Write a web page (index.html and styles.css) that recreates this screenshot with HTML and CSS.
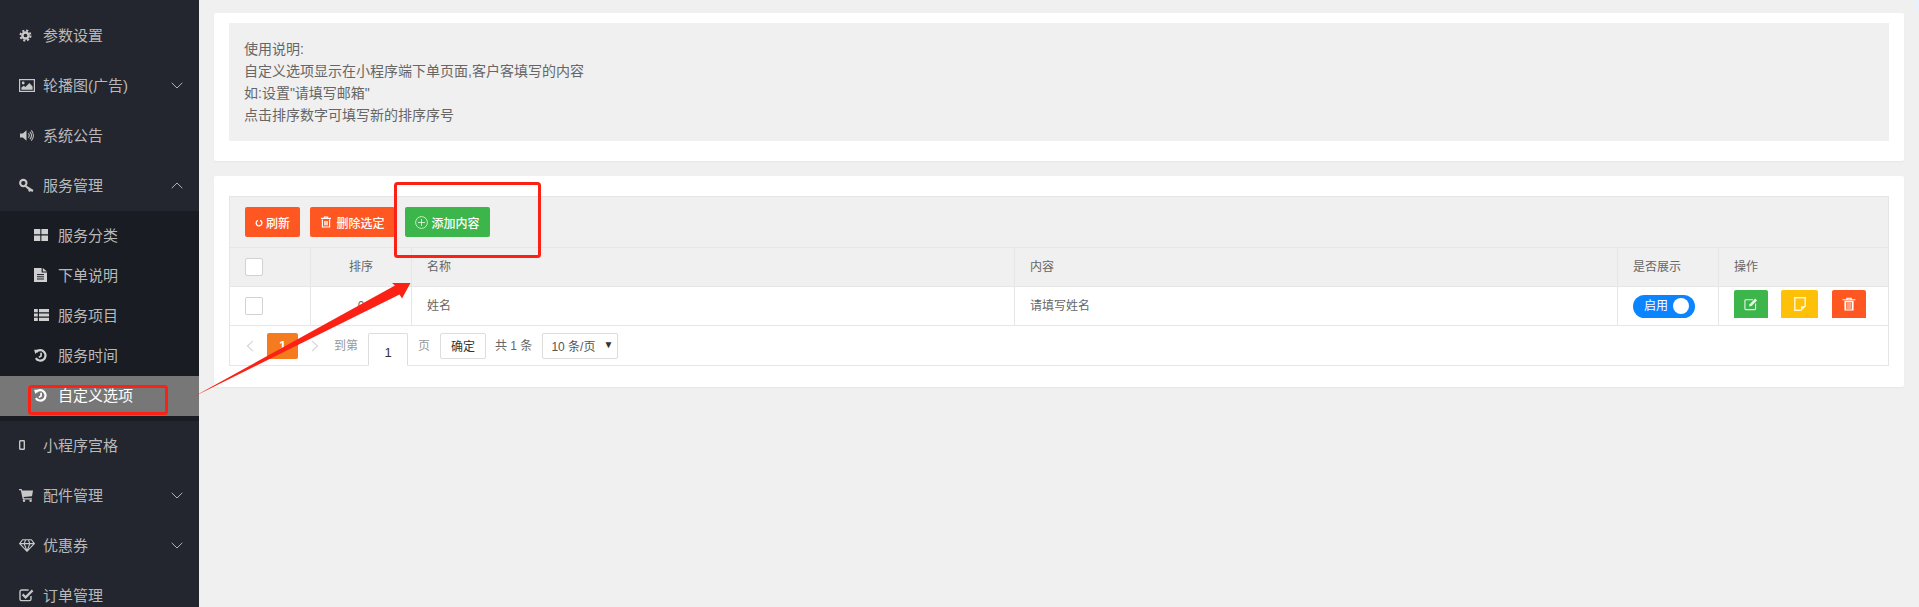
FILE: index.html
```html
<!DOCTYPE html>
<html lang="zh">
<head>
<meta charset="utf-8">
<title>自定义选项</title>
<link rel="stylesheet" href="styles.css">
</head>
<body>
<svg class="sprite" width="0" height="0" aria-hidden="true">
  <symbol id="i-gear" viewBox="0 0 16 16"><circle cx="8" cy="8" r="3.8" fill="none" stroke="currentColor" stroke-width="3"/><circle cx="8" cy="8" r="6.2" fill="none" stroke="currentColor" stroke-width="2.4" stroke-dasharray="2.6 2.27"/></symbol>
  <symbol id="i-pic" viewBox="0 0 16 13"><rect x=".6" y=".6" width="14.8" height="11.8" fill="none" stroke="currentColor" stroke-width="1.2"/><circle cx="4.2" cy="4" r="1.4" fill="currentColor"/><path d="M2.4 10.8V8.6l2.4-1.8 1.6 1.2 4-4 3.2 3.4v3.4z" fill="currentColor"/></symbol>
  <symbol id="i-vol" viewBox="0 0 16 14"><path d="M1 4.8h3L8 1.4v11.2L4 9.2H1z" fill="currentColor"/><path d="M10 4.8a3 3 0 0 1 0 4.4M11.6 3a5.4 5.4 0 0 1 0 8M13.2 1.6a7.6 7.6 0 0 1 0 10.8" fill="none" stroke="currentColor" stroke-width="1.1"/></symbol>
  <symbol id="i-key" viewBox="0 0 16 16"><circle cx="4.6" cy="5.4" r="3.4" fill="none" stroke="currentColor" stroke-width="2.2"/><path d="M7 7.4l8.4 5.4-1 2.2-2-1.2-.7 1.2-1.8-1.1.2-1.5L6 9z" fill="currentColor"/></symbol>
  <symbol id="i-grid" viewBox="0 0 14 12"><path d="M0 0h6.3v5.3H0zM7.4 0H14v5.3H7.4zM0 6.5h6.3V12H0zM7.4 6.5H14V12H7.4z" fill="currentColor"/></symbol>
  <symbol id="i-file" viewBox="0 0 13 14"><path d="M0 0h7.6v4.4H13V14H0zM8.8 0 13 3.4H8.8z" fill="currentColor"/><path d="M3 6.6h7M3 8.8h7M3 11h7" stroke="#191c22" stroke-width="1"/></symbol>
  <symbol id="i-list" viewBox="0 0 15 12"><path d="M0 0h3.8v3.3H0zM5 0h10v3.3H5zM0 4.4h3.8v3.2H0zM5 4.4h10v3.2H5zM0 8.7h3.8V12H0zM5 8.7h10V12H5z" fill="currentColor"/></symbol>
  <symbol id="i-hist" viewBox="0 0 14 14"><path d="M2.6 3.2A5.6 5.6 0 1 1 2 9.8" fill="none" stroke="currentColor" stroke-width="2.4"/><path d="M.2 .8l5.6.1-4.4 4.4z" fill="currentColor"/><path d="M7.6 4v3.6L5.2 9" fill="none" stroke="currentColor" stroke-width="1.8"/></symbol>
  <symbol id="i-phone" viewBox="0 0 6 10"><rect x=".7" y=".7" width="4.6" height="8.6" rx=".6" fill="none" stroke="currentColor" stroke-width="1.4"/></symbol>
  <symbol id="i-cart" viewBox="0 0 14 13"><path d="M0 0h2.6l.5 1.6H14l-1 5.6-8.4.8.3 1.2h8v1.2H3.8L1.8 1.2H0z" fill="currentColor"/><circle cx="5" cy="11.8" r="1.2" fill="currentColor"/><circle cx="11.6" cy="11.8" r="1.2" fill="currentColor"/></symbol>
  <symbol id="i-dia" viewBox="0 0 16 13"><path d="M3.6.7h8.8L15.3 4.6 8 12.3.7 4.6zM.7 4.6h14.6M5.2 4.6 8 12.3l2.8-7.7M5.2 4.6 6.6.7M10.8 4.6 9.4.7" fill="none" stroke="currentColor" stroke-width="1.1"/></symbol>
  <symbol id="i-check" viewBox="0 0 15 14"><path d="M12 8v3a1.6 1.6 0 0 1-1.6 1.6H2.6A1.6 1.6 0 0 1 1 11V3.6A1.6 1.6 0 0 1 2.6 2h7" fill="none" stroke="currentColor" stroke-width="1.4"/><path d="M3.6 6.4l3 3 7-7" fill="none" stroke="currentColor" stroke-width="2.2"/></symbol>
  <symbol id="i-down" viewBox="0 0 12 7"><path d="M.7.8 6 6l5.3-5.2" fill="none" stroke="currentColor" stroke-width="1"/></symbol>
  <symbol id="i-up" viewBox="0 0 12 7"><path d="M.7 6.2 6 1l5.3 5.2" fill="none" stroke="currentColor" stroke-width="1"/></symbol>
</svg>

<div class="app">
  <nav class="side">
    <a class="nav-item"><span class="nav-ico"><svg class="ic-gear"><use href="#i-gear"/></svg></span>参数设置</a>
    <a class="nav-item"><span class="nav-ico"><svg class="ic-pic"><use href="#i-pic"/></svg></span>轮播图(广告)<svg class="chev"><use href="#i-down"/></svg></a>
    <a class="nav-item"><span class="nav-ico"><svg class="ic-vol"><use href="#i-vol"/></svg></span>系统公告</a>
    <a class="nav-item"><span class="nav-ico"><svg class="ic-key"><use href="#i-key"/></svg></span>服务管理<svg class="chev"><use href="#i-up"/></svg></a>
    <div class="sub">
      <a class="sub-item"><span class="sub-ico"><svg class="ic-grid"><use href="#i-grid"/></svg></span>服务分类</a>
      <a class="sub-item"><span class="sub-ico"><svg class="ic-file"><use href="#i-file"/></svg></span>下单说明</a>
      <a class="sub-item"><span class="sub-ico"><svg class="ic-list"><use href="#i-list"/></svg></span>服务项目</a>
      <a class="sub-item"><span class="sub-ico"><svg class="ic-hist"><use href="#i-hist"/></svg></span>服务时间</a>
      <a class="sub-item active"><span class="sub-ico"><svg class="ic-hist"><use href="#i-hist"/></svg></span>自定义选项</a>
    </div>
    <a class="nav-item"><span class="nav-ico"><svg class="ic-phone"><use href="#i-phone"/></svg></span>小程序宫格</a>
    <a class="nav-item"><span class="nav-ico"><svg class="ic-cart"><use href="#i-cart"/></svg></span>配件管理<svg class="chev"><use href="#i-down"/></svg></a>
    <a class="nav-item"><span class="nav-ico"><svg class="ic-dia"><use href="#i-dia"/></svg></span>优惠券<svg class="chev"><use href="#i-down"/></svg></a>
    <a class="nav-item"><span class="nav-ico"><svg class="ic-check"><use href="#i-check"/></svg></span>订单管理</a>
  </nav>

  <main class="main">
    <section class="card card-note">
      <div class="note">
        <p>使用说明:</p>
        <p>自定义选项显示在小程序端下单页面,客户客填写的内容</p>
        <p>如:设置"请填写邮箱"</p>
        <p>点击排序数字可填写新的排序序号</p>
      </div>
    </section>

    <section class="card card-table">
      <div class="tbl">
        <div class="toolbar">
          <button class="btn btn-red btn-short">
            <svg class="btn-ico-s" viewBox="0 0 8 8"><circle cx="4" cy="4" r="2.8" fill="none" stroke="#fff" stroke-width="1.3" stroke-dasharray="15 3" transform="rotate(-65 4 4)"/></svg>刷新
          </button>
          <button class="btn btn-red">
            <svg class="btn-ico" viewBox="0 0 12 12"><path d="M1 2.4h10M4.4 2.2V1h3.2v1.2M2.4 3.6v7.4h7.2V3.6" fill="none" stroke="#fff" stroke-width="1.1"/><path d="M4 5v4.4h4V5z" fill="#fff" opacity=".7"/></svg>删除选定
          </button>
          <button class="btn btn-green">
            <svg class="btn-ico-l" viewBox="0 0 13 13"><circle cx="6.5" cy="6.5" r="5.9" fill="none" stroke="#d9f2dc" stroke-width=".9"/><path d="M6.5 3v7M3 6.5h7" stroke="#d9f2dc" stroke-width=".9"/></svg>添加内容
          </button>
        </div>

        <table class="grid">
          <colgroup>
            <col class="c-check"><col class="c-sort"><col class="c-wide"><col class="c-wide"><col class="c-show"><col class="c-ops">
          </colgroup>
          <thead>
            <tr>
              <th class="cell-check"><span class="checkbox"></span></th>
              <th class="center">排序</th>
              <th>名称</th>
              <th>内容</th>
              <th>是否展示</th>
              <th>操作</th>
            </tr>
          </thead>
          <tbody>
            <tr>
              <td class="cell-check"><span class="checkbox"></span></td>
              <td class="center">0</td>
              <td>姓名</td>
              <td>请填写姓名</td>
              <td><span class="switch">启用<i class="knob"></i></span></td>
              <td>
                <div class="ops">
                  <a class="op op-green"><svg class="op-ico" viewBox="0 0 15 14"><path d="M9.6 2.4H2a1 1 0 0 0-1 1V12a1 1 0 0 0 1 1h9.4a1 1 0 0 0 1-1V6.4" fill="none" stroke="#e6f6e8" stroke-width="1.2"/><path d="M5.4 9.8l.6-2.6L12 1.2l2 2-6 6z" fill="#e6f6e8"/></svg></a>
                  <a class="op op-yellow"><svg class="op-ico" viewBox="0 0 11 13"><path d="M.7.7h9.6v7.6l-4 4H.7z" fill="none" stroke="#fff6d8" stroke-width="1.3"/><path d="M10 8.6H6.4v3.6z" fill="#fff6d8"/></svg></a>
                  <a class="op op-red"><svg class="op-ico" viewBox="0 0 15 14"><path d="M.6 2.4h13.8M5.2 2.2V.8h4.6v1.4" fill="none" stroke="#fff" stroke-width="1.2"/><path d="M2.6 3.6h9.8V14H2.6zM4.4 4.8V12.8h6.2V4.8z" fill="#fff" fill-rule="evenodd"/><path d="M5 5h5v7.6H5z" fill="#fff" opacity=".45"/></svg></a>
                </div>
              </td>
            </tr>
          </tbody>
        </table>

        <div class="pager">
          <svg class="pg-arrow pg-prev" viewBox="0 0 8 12"><path d="M7 .8 1.4 6 7 11.2" fill="none" stroke="#d4d4d4" stroke-width="1.1"/></svg>
          <span class="pg-cur">1</span>
          <svg class="pg-arrow pg-next" viewBox="0 0 8 12"><path d="M1 .8 6.6 6 1 11.2" fill="none" stroke="#d4d4d4" stroke-width="1.1"/></svg>
          <span class="pg-label pg-to">到第</span>
          <span class="pg-input">1</span>
          <span class="pg-label pg-page">页</span>
          <span class="pg-ok">确定</span>
          <span class="pg-total">共 1 条</span>
          <span class="pg-select">10 条/页<i class="caret">▼</i></span>
        </div>
      </div>
    </section>
  </main>
</div>

<i class="corner"></i>

<svg class="marks" viewBox="0 0 1919 607" aria-hidden="true">
  <rect class="mark-box" x="395.5" y="183.5" width="144" height="73" rx="2"/>
  <rect class="mark-box" x="29.5" y="386.5" width="137" height="27" rx="2"/>
  <polygon class="mark-arrow" points="193,397 395,285.5 392,283 410.5,283 402,298.5 399.5,294.5"/>
</svg>
</body>
</html>
```
FILE: styles.css
```css
* { box-sizing: border-box; }
html, body { margin: 0; height: 100%; overflow: hidden; }
body {
  position: relative;
  background: #f0f0f0;
  color: #666;
  font: 12px/1.4 "Liberation Sans", "Noto Sans CJK SC", sans-serif;
}
p { margin: 0; }
.sprite { position: absolute; }

.app { display: flex; height: 607px; }

/* sidebar */
.side {
  flex: 0 0 199px;
  padding-top: 11px;
  background: #23262f;
  color: #b9b9b9;
  font-size: 15px;
  overflow: hidden;
}
.nav-item, .sub-item { display: flex; align-items: center; white-space: nowrap; }
.nav-item { height: 50px; padding: 0 16px 2px 19px; }
.nav-ico { flex: 0 0 24px; display: flex; align-items: center; color: #c8c8c8; }
.sub { padding: 5px 0; background: #191c22; }
.sub-item { height: 40px; padding: 0 0 2px 34px; }
.sub-ico { flex: 0 0 24px; display: flex; align-items: center; color: #d0d0d0; }
.sub-item.active { background: #777; color: #fff; }
.sub-item.active .sub-ico { color: #fff; }
.chev { width: 12px; height: 7px; margin-left: auto; color: #b4b4b4; }

.ic-gear { width: 13px; height: 13px; }
.ic-pic { width: 16px; height: 13px; }
.ic-vol { width: 15px; height: 13px; }
.ic-key { width: 15px; height: 15px; }
.ic-grid { width: 14px; height: 12px; }
.ic-file { width: 13px; height: 14px; }
.ic-list { width: 15px; height: 12px; }
.ic-hist { width: 13px; height: 13px; }
.ic-phone { width: 6px; height: 10px; }
.ic-cart { width: 14px; height: 13px; }
.ic-dia { width: 16px; height: 13px; }
.ic-check { width: 15px; height: 14px; }

/* main */
.main {
  flex: 1;
  display: flex;
  flex-direction: column;
  gap: 15px;
  padding: 13px 15px;
}
.card {
  background: #fff;
  border-radius: 2px;
  box-shadow: 0 1px 2px rgba(0, 0, 0, .04);
}
.card-note { padding: 10px 15px 20px; }
.note {
  padding: 15px;
  background: #f0f0f0;
  font-size: 14px;
  line-height: 22px;
  color: #666;
}
.card-table { padding: 20px 15px 21px 15px; }
.tbl { border: 1px solid #e6e6e6; }

/* toolbar */
.toolbar {
  display: flex;
  align-items: center;
  gap: 10px;
  height: 51px;
  padding: 0 15px;
  background: #f0f0f0;
  border-bottom: 1px solid #e6e6e6;
}
.btn {
  display: inline-flex;
  align-items: center;
  justify-content: center;
  width: 85px;
  height: 30px;
  padding: 0;
  border: 0;
  border-radius: 2px;
  color: #fff;
  font: 500 12px "Liberation Sans", "Noto Sans CJK SC", sans-serif;
}
.btn-short { width: 55px; }
.btn-red { background: #ff5722; }
.btn-green { background: #3cb54a; }
.btn-ico-s { width: 8px; height: 8px; margin: 2px 3px 0 0; }
.btn-ico { width: 12px; height: 12px; margin-right: 4px; }
.btn-ico-l { width: 13px; height: 13px; margin-right: 3px; }

/* table */
.grid { width: 100%; border-collapse: separate; border-spacing: 0; table-layout: fixed; }
.c-check { width: 81px; }
.c-sort { width: 101px; }
.c-wide { width: 603px; }
.c-show { width: 101px; }
.grid th, .grid td {
  height: 39px;
  padding: 0 15px;
  border-right: 1px solid #e6e6e6;
  border-bottom: 1px solid #e6e6e6;
  font-weight: 400;
  text-align: left;
  color: #666;
  font-size: 12px;
}
.grid th:last-child, .grid td:last-child { border-right: 0; }
.grid th { background: #f0f0f0; }
.grid .center { text-align: center; }
.checkbox {
  display: block;
  width: 18px;
  height: 18px;
  background: #fff;
  border: 1px solid #d2d2d2;
  border-radius: 2px;
}
.switch {
  display: flex;
  align-items: center;
  width: 62px;
  height: 23px;
  padding-left: 11px;
  border-radius: 12px;
  background: #0a84ff;
  color: #fff;
}
.knob {
  width: 16px;
  height: 16px;
  margin-left: 5px;
  border-radius: 50%;
  background: #fff;
}
.ops { display: flex; align-items: flex-start; height: 28px; margin-top: -5px; }
.op {
  display: flex;
  align-items: center;
  justify-content: center;
  width: 34px;
  height: 28px;
  border-radius: 2px 2px 0 0;
}
.op-green { background: #3cb54a; }
.op-yellow { width: 37px; margin: 0 14px 0 13px; background: #ffc107; }
.op-red { background: #ff5722; }
.op-ico { width: 14px; height: 14px; }

/* pager */
.pager {
  display: flex;
  align-items: flex-start;
  height: 39px;
  padding: 7px 0 0 16px;
}
.pg-arrow { width: 8px; height: 12px; margin-top: 7px; }
.pg-cur {
  width: 31px;
  height: 26px;
  margin-left: 13px;
  border-radius: 2px;
  background: #f47c1e;
  color: #fff;
  font-weight: 700;
  text-align: center;
  line-height: 26px;
}
.pg-next { margin-left: 13px; }
.pg-label { color: #999; line-height: 26px; }
.pg-to { margin-left: 15px; }
.pg-input {
  width: 40px;
  height: 33px;
  margin-left: 10px;
  padding-top: 10px;
  background: #fff;
  border: 1px solid #ddd;
  border-bottom-color: #fff;
  border-radius: 2px 2px 0 0;
  color: #333;
  font-size: 13px;
  text-align: center;
}
.pg-page { margin-left: 10px; }
.pg-ok, .pg-select {
  height: 26px;
  background: #fff;
  border: 1px solid #ddd;
  border-radius: 2px;
  color: #333;
  line-height: 26px;
}
.pg-ok { width: 46px; margin-left: 10px; text-align: center; }
.pg-total { margin-left: 9px; color: #666; line-height: 26px; }
.pg-select {
  display: flex;
  width: 76px;
  margin-left: 10px;
  padding-left: 8px;
  color: #555;
}
.caret { margin-left: 8px; font-size: 10px; font-style: normal; color: #333; line-height: 22px; }

/* overlays */
.corner {
  position: absolute;
  top: 0;
  right: 0;
  width: 4px;
  height: 12px;
  background: #e8f2fd;
}
.marks {
  position: absolute;
  inset: 0;
  width: 1919px;
  height: 607px;
  pointer-events: none;
}
.mark-box { fill: none; stroke: #fb2215; stroke-width: 3; }
.mark-arrow { fill: #fb2215; }
```
